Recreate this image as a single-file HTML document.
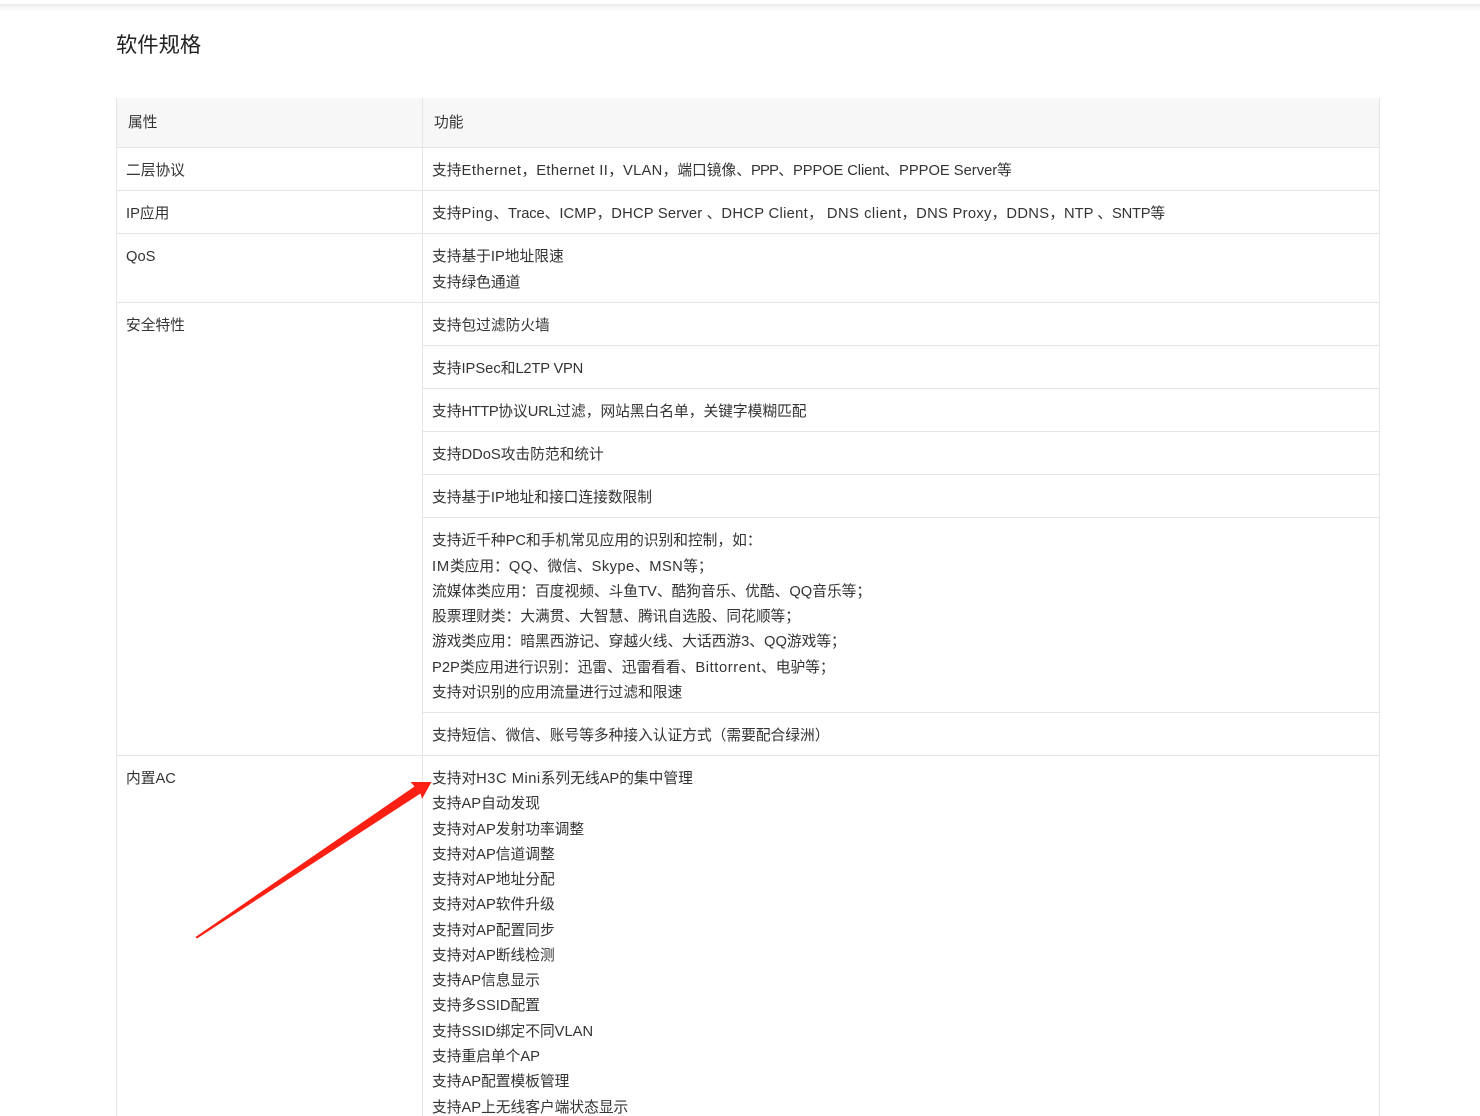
<!DOCTYPE html>
<html><head><meta charset="utf-8"><style>
html,body{margin:0;padding:0;background:#fff;width:1480px;height:1116px;overflow:hidden}
#p{position:relative;width:1480px;height:1116px;overflow:hidden;font-family:"Liberation Sans","Noto Sans CJK SC",sans-serif;font-size:14.72px;color:#333}
.t{position:absolute;white-space:nowrap;line-height:20px;height:20px}
.l{position:absolute;background:#e5e5e5}
.h{left:116px;width:1264px;height:1px}
.a{left:126px}.b{left:432px}
i{font-style:normal}
</style></head><body><div id="p">
<div style="position:absolute;left:0;top:4px;width:1480px;height:9px;background:linear-gradient(#e8e8e8,#f6f6f6 30%,#fff)"></div>
<div class="t" style="left:116px;font-size:21.3px;height:28px;line-height:28px;color:#222;top:31px">软件规格</div>
<div style="position:absolute;left:117px;top:98px;width:1262px;height:49px;background:#f7f7f7"></div>
<div class="l" style="left:116px;top:98px;width:1px;height:1018px"></div>
<div class="l" style="left:422px;top:98px;width:1px;height:1018px"></div>
<div class="l" style="left:1379px;top:98px;width:1px;height:1018px"></div>
<div class="l h" style="top:147px"></div>
<div class="l h" style="top:190px"></div>
<div class="l h" style="top:233px"></div>
<div class="l h" style="top:302px"></div>
<div class="l" style="left:422px;width:958px;height:1px;top:345px"></div>
<div class="l" style="left:422px;width:958px;height:1px;top:388px"></div>
<div class="l" style="left:422px;width:958px;height:1px;top:431px"></div>
<div class="l" style="left:422px;width:958px;height:1px;top:474px"></div>
<div class="l" style="left:422px;width:958px;height:1px;top:517px"></div>
<div class="l" style="left:422px;width:958px;height:1px;top:712px"></div>
<div class="l h" style="top:755px"></div>
<div class="t" style="left:128px;top:113px">属性</div>
<div class="t" style="left:434px;top:113px">功能</div>
<div class="t a" style="top:161px">二层协议</div>
<div class="t b" style="top:161px">支持<i style="letter-spacing:.55px">Ethernet</i>，<i style="letter-spacing:.37px">Ethernet II</i>，<i style="letter-spacing:.3px">VLAN</i>，端口镜像、<i style="letter-spacing:-.7px">PPP</i>、<i style="letter-spacing:-.1px">PPPOE Client</i>、PPPOE Server等</div>
<div class="t a" style="top:204px">IP应用</div>
<div class="t b" style="top:204px">支持<i style="letter-spacing:.6px">Ping</i>、<i style="letter-spacing:-.1px">Trace</i>、<i style="letter-spacing:.1px">ICMP</i>，<i style="letter-spacing:.2px">DHCP Server </i>、<i style="letter-spacing:.32px">DHCP Client</i>， <i style="letter-spacing:.5px">DNS client</i>，<i style="letter-spacing:.3px">DNS Proxy</i>，<i style="letter-spacing:.3px">DDNS</i>，<i>NTP </i>、<i style="letter-spacing:-.25px">SNTP</i>等</div>
<div class="t a" style="top:247px">QoS</div>
<div class="t b" style="top:247px">支持基于IP地址限速</div>
<div class="t b" style="top:273px">支持绿色通道</div>
<div class="t a" style="top:316px">安全特性</div>
<div class="t b" style="top:316px">支持包过滤防火墙</div>
<div class="t b" style="top:359px">支持IPSec和<i style="letter-spacing:-.2px">L2TP VPN</i></div>
<div class="t b" style="top:402px">支持<i style="letter-spacing:-.4px">HTTP</i>协议<i style="letter-spacing:-.3px">URL</i>过滤，网站黑白名单，关键字模糊匹配</div>
<div class="t b" style="top:445px">支持DDoS攻击防范和统计</div>
<div class="t b" style="top:488px">支持基于IP地址和接口连接数限制</div>
<div class="t b" style="top:531px">支持近千种PC和手机常见应用的识别和控制，如：</div>
<div class="t b" style="top:557px"><i style="letter-spacing:.8px">IM</i>类应用：<i style="letter-spacing:.5px">QQ</i>、微信、<i style="letter-spacing:.4px">Skype</i>、<i style="letter-spacing:.4px">MSN</i>等；</div>
<div class="t b" style="top:582px">流媒体类应用：百度视频、斗鱼TV、酷狗音乐、优酷、QQ音乐等；</div>
<div class="t b" style="top:607px">股票理财类：大满贯、大智慧、腾讯自选股、同花顺等；</div>
<div class="t b" style="top:632px">游戏类应用：暗黑西游记、穿越火线、大话西游3、QQ游戏等；</div>
<div class="t b" style="top:658px">P2P类应用进行识别：迅雷、迅雷看看、<i style="letter-spacing:.6px">Bittorrent</i>、电驴等；</div>
<div class="t b" style="top:683px">支持对识别的应用流量进行过滤和限速</div>
<div class="t b" style="top:726px">支持短信、微信、账号等多种接入认证方式（需要配合绿洲）</div>
<div class="t a" style="top:769px">内置AC</div>
<div class="t b" style="top:769px">支持对<i style="letter-spacing:.5px">H3C Mini</i>系列无线AP的集中管理</div>
<div class="t b" style="top:794px">支持AP自动发现</div>
<div class="t b" style="top:820px">支持对AP发射功率调整</div>
<div class="t b" style="top:845px">支持对AP信道调整</div>
<div class="t b" style="top:870px">支持对AP地址分配</div>
<div class="t b" style="top:895px">支持对AP软件升级</div>
<div class="t b" style="top:921px">支持对AP配置同步</div>
<div class="t b" style="top:946px">支持对AP断线检测</div>
<div class="t b" style="top:971px">支持AP信息显示</div>
<div class="t b" style="top:996px">支持多SSID配置</div>
<div class="t b" style="top:1022px">支持SSID绑定不同VLAN</div>
<div class="t b" style="top:1047px">支持重启单个AP</div>
<div class="t b" style="top:1072px">支持AP配置模板管理</div>
<div class="t b" style="top:1098px">支持AP上无线客户端状态显示</div>
<svg style="position:absolute;left:0;top:0" width="1480" height="1116"><path d="M195.5 937 L414.5 786.5 L410.5 782 L431.5 782 L422 799 L420.5 793.5 L197 938.5 Z" fill="#fb2013"/></svg>
</div></body></html>
